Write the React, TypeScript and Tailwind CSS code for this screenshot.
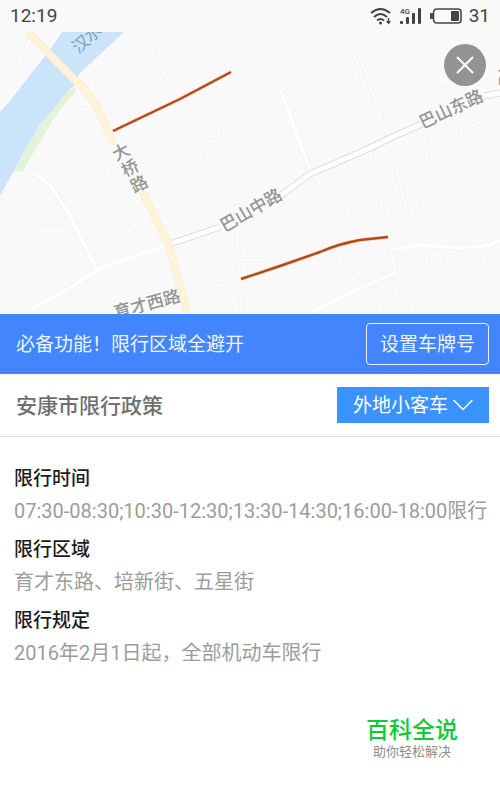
import { useState } from 'react'
import { ChevronDown, X } from 'lucide-react'
import clsx from 'clsx'

const minorRoads = [
  'M252 32 L270 65 L281 92 L295 130 L312 174',
  'M307 34 L340 96 L370 150 L378 190 L388 237 L395 270 L408 314',
  'M341 32 L357 62 L370 100 L390 138 L398 175 L414 243',
  'M350 32 L367 75 L380 115 L390 138',
  'M250 62 L308 34',
  'M367 72 L420 52 L455 38 L475 42',
  'M378 111 L432 88 L458 90',
  'M280 120 L310 105 L350 85 L338 64',
  'M282 35 L298 75 L288 72',
  'M273 138 L282 136 L292 130',
  'M457 70 L460 120 L463 145 L458 160 L475 168 L500 168',
  'M425 130 L427 166 L440 175',
  'M463 130 L480 122 L500 128',
  'M408 203 L430 195 L440 198 L452 204 L465 192 L482 195',
  'M422 202 L432 218 L445 222 L463 247',
  'M425 247 L427 264',
  'M447 249 L448 282',
  'M491 245 L483 260 L495 280 L500 290',
  'M433 170 L440 175 L440 188',
  'M310 178 L326 213 L351 203 L358 225 L358 250 L375 285',
  'M355 221 L383 216',
  'M280 200 L302 252',
  'M341 248 L358 290',
  'M350 270 L366 262',
  'M368 290 L377 314',
  'M195 125 L215 174 L236 215 L240 280 L241 314',
  'M236 260 L285 259',
  'M185 294 L241 280',
  'M0 230 L20 190 L37 170 L68 120 L98 103',
  'M55 192 L100 173 L195 127 L281 90 L358 53',
  'M75 226 L120 208 L168 190',
  'M100 170 L118 200 L130 232',
  'M8 253 L30 227 L40 222 L65 223',
  'M73 285 L87 314',
  'M145 32 L162 70 L180 105 L195 130',
  'M207 30 L230 70',
  'M70 112 L95 107 L150 80 L200 55 L250 32',
  'M96 90 L100 75 L145 38',
  'M115 62 L130 85',
  'M125 52 L138 80',
  'M150 50 L172 40 L178 55',
  'M200 55 L213 75',
  'M231 72 L250 64',
  'M200 130 L218 125 L220 140 L208 142',
  'M205 160 L245 150',
  'M130 105 L133 118',
  'M68 128 L95 160',
  'M0 85 L20 60 L30 40',
  'M0 52 L22 36',
]

const midRoads = [
  'M35 174 L50 185 L70 215 L96 268',
  'M30 310 L75 285 L97 270 L130 258 L167 245',
  'M312 312 L350 293 L395 273',
  'M391 250 L420 245 L465 248 L490 245 L500 240',
  'M281 90 L295 130 L312 174',
]

// gaps are left where the road names stand
const mainRoad = 'M167 245 L220 227 M280 196 L310 174 L370 148 L390 138 L422 124 M484 96 L500 93'
const bridgeRoad = 'M28 32 L45 50 L80 85 Q92 96 98 109 L114 145 M142 191 L168 243 L180 285 L188 316'

const restrictedRoads = [
  'M113 131 L180 99 L231 72',
  'M241 279 L280 266 L320 252 Q338 244 360 240 L388 237',
]

const roadLabels = [
  { text: '大', x: 121, y: 152, angle: -27 },
  { text: '桥', x: 130, y: 168, angle: -27 },
  { text: '路', x: 139, y: 184, angle: -27 },
  { text: '巴山中路', x: 251, y: 210, angle: -30 },
  { text: '巴山东路', x: 451, y: 109, angle: -25 },
  { text: '育才西路', x: 147, y: 304, angle: -15 },
  { text: '高', x: 506, y: 77, angle: 0 },
]

const policies = [
  { title: '限行时间', content: '07:30-08:30;10:30-12:30;13:30-14:30;16:00-18:00限行' },
  { title: '限行区域', content: '育才东路、培新街、五星街' },
  { title: '限行规定', content: '2016年2月1日起，全部机动车限行' },
]

function StatusBar() {
  return (
    <header className="flex h-8 items-center justify-between bg-[#fafafa] px-[10px] text-[19px] text-[#444]">
      <span>12:19</span>
      <div className="flex items-center gap-[7px]">
        <svg width="22" height="20" viewBox="0 0 22 20" fill="none" stroke="#444" strokeWidth="2">
          <path d="M1 7 Q10.500 -1 20 7" />
          <path d="M4 11 Q10.500 5 17 11" />
          <path d="M7 14.500 Q10.500 11.500 14 14.500" />
          <circle cx="10.500" cy="17" r="1.500" fill="#444" stroke="none" />
          <path d="M18.500 12 V17" strokeWidth="1.500" />
          <path d="M16 15 H21 L18.500 18.500 Z" fill="#444" stroke="none" />
        </svg>
        <svg width="24" height="20" viewBox="0 0 24 20" fill="#444">
          <text x="1" y="8" fontSize="8" fontWeight="500">4G</text>
          <rect x="1" y="15" width="3" height="3" rx="1" />
          <rect x="7" y="11" width="3" height="7" rx="1" />
          <rect x="13" y="7" width="3" height="11" rx="1" />
          <rect x="19" y="2" width="3" height="16" rx="1" />
        </svg>
        <svg width="32" height="18" viewBox="0 0 32 18" fill="none">
          <path d="M7 2 H28 Q31 2 31 5 V13 Q31 16 28 16 H7 Q3.500 16 3.500 12 V6 Q3.500 2 7 2 Z" stroke="#444" strokeWidth="1.600" />
          <rect x="0" y="6" width="3" height="6" rx="1" fill="#444" />
          <rect x="21" y="4" width="8" height="10" rx="1" fill="#444" />
        </svg>
        <span>31</span>
      </div>
    </header>
  )
}

function RoadMap() {
  return (
    <svg className="block w-full" viewBox="0 32 500 282">
      <rect x="0" y="32" width="500" height="282" fill="#f9f9f9" />
      <path d="M62 32 L50 50 L37 66 L10 101 L0 112 V196 L13 172 L25 150 L40 125 L73 87 L80 73 L124 32 Z" fill="#cbe3fb" />
      <path d="M76 88 L70 88 L40 126 L25 150 L13 172 L23 171 L36 148 L56 115 L75 92 Z" fill="#e0f5d8" />

      <g fill="none" strokeLinejoin="round">
        <g stroke="#f0f0f0" strokeWidth="4">
          {minorRoads.map((d) => <path key={d} d={d} />)}
        </g>
        <g stroke="#fbfbfb" strokeWidth="3">
          {minorRoads.map((d) => <path key={d} d={d} />)}
        </g>
        <g stroke="#eeeeee" strokeWidth="5">
          {midRoads.map((d) => <path key={d} d={d} />)}
        </g>
        <g stroke="#fff" strokeWidth="4">
          {midRoads.map((d) => <path key={d} d={d} />)}
        </g>
        <path d={mainRoad} stroke="#dedede" strokeWidth="7" />
        <path d={mainRoad} stroke="#fff" strokeWidth="5" />
        <path d={bridgeRoad} stroke="#f8efd8" strokeWidth="8" />
        <path d={bridgeRoad} stroke="#fff4d8" strokeWidth="6" />
        {restrictedRoads.map((d) => (
          <g key={d}>
            <path d={d} stroke="#fbe0c4" strokeWidth="4" />
            <path d={d} stroke="#b5461f" strokeWidth="2.400" />
          </g>
        ))}
      </g>

      <g fontSize="17" fontWeight="500" fill="#949494" textAnchor="middle" dominantBaseline="central">
        {roadLabels.map(({ text, x, y, angle }) => (
          <text key={text} x={x} y={y} transform={`rotate(${angle} ${x} ${y})`}>{text}</text>
        ))}
      </g>
      <g fontSize="17" fill="#7b9fbd" textAnchor="middle" dominantBaseline="central">
        <text x="81" y="44" transform="rotate(-40 81 44)">汉</text>
        <text x="93" y="33" transform="rotate(-40 93 33)">水</text>
      </g>
    </svg>
  )
}

export default function App() {
  const [open, setOpen] = useState(true)

  return (
    <div className="min-h-screen bg-white font-[Roboto,'Noto_Sans_CJK_SC',sans-serif]">
      <StatusBar />

      <section className={clsx('relative', !open && 'hidden')}>
        <RoadMap />
        <button
          type="button"
          aria-label="关闭"
          onClick={() => setOpen(false)}
          className="absolute top-3 right-[14px] flex size-[42px] items-center justify-center rounded-full bg-[#939393] text-white"
        >
          <X size={30} strokeWidth={1.5} />
        </button>
      </section>

      {/* Banner */}
      <section className="flex items-center justify-between bg-[#4285fd] py-[9px] pr-[11px] pl-4 text-[19px] text-[#eef5ff]">
        <p className="pt-[3px]">必备功能！限行区域全避开</p>
        <button type="button" className="h-[42px] rounded-sm border border-[#eef5ff] px-[13px] pt-[3px]">
          设置车牌号
        </button>
      </section>

      {/* City and vehicle type */}
      <section className="flex items-center justify-between border-b border-[#dedede] py-[13px] pr-[11px] pl-4">
        <h1 className="pt-[3px] text-[21px] font-medium text-[#707070]">安康市限行政策</h1>
        <div className="relative text-white">
          <select
            aria-label="车辆类型"
            className="block h-[36px] w-[152px] appearance-none bg-[#3a92fc] pt-[3px] pl-4 text-[19px]"
          >
            <option>外地小客车</option>
            <option>本地小客车</option>
          </select>
          <ChevronDown
            size={36}
            strokeWidth={1}
            className="pointer-events-none absolute top-0 right-2"
          />
        </div>
      </section>

      <dl className="pt-6 pr-2 pl-[14px]">
        {policies.map(({ title, content }) => (
          <div key={title} className="pb-1">
            <dt className="h-[34px] text-[19px] leading-[36px] font-medium text-[#1c1c1c]">{title}</dt>
            <dd className="text-[20px] leading-[33px] text-[#9c9c9c]">{content}</dd>
          </div>
        ))}
      </dl>

      <footer className="flex justify-end pt-11 pr-[42px]">
        <div className="text-center">
          <p className="text-[23px] leading-[26px] font-medium text-[#0ccb35]">百科全说</p>
          <p className="text-[13px] leading-4 text-[#8d8d8d]">助你轻松解决</p>
        </div>
      </footer>
    </div>
  )
}
